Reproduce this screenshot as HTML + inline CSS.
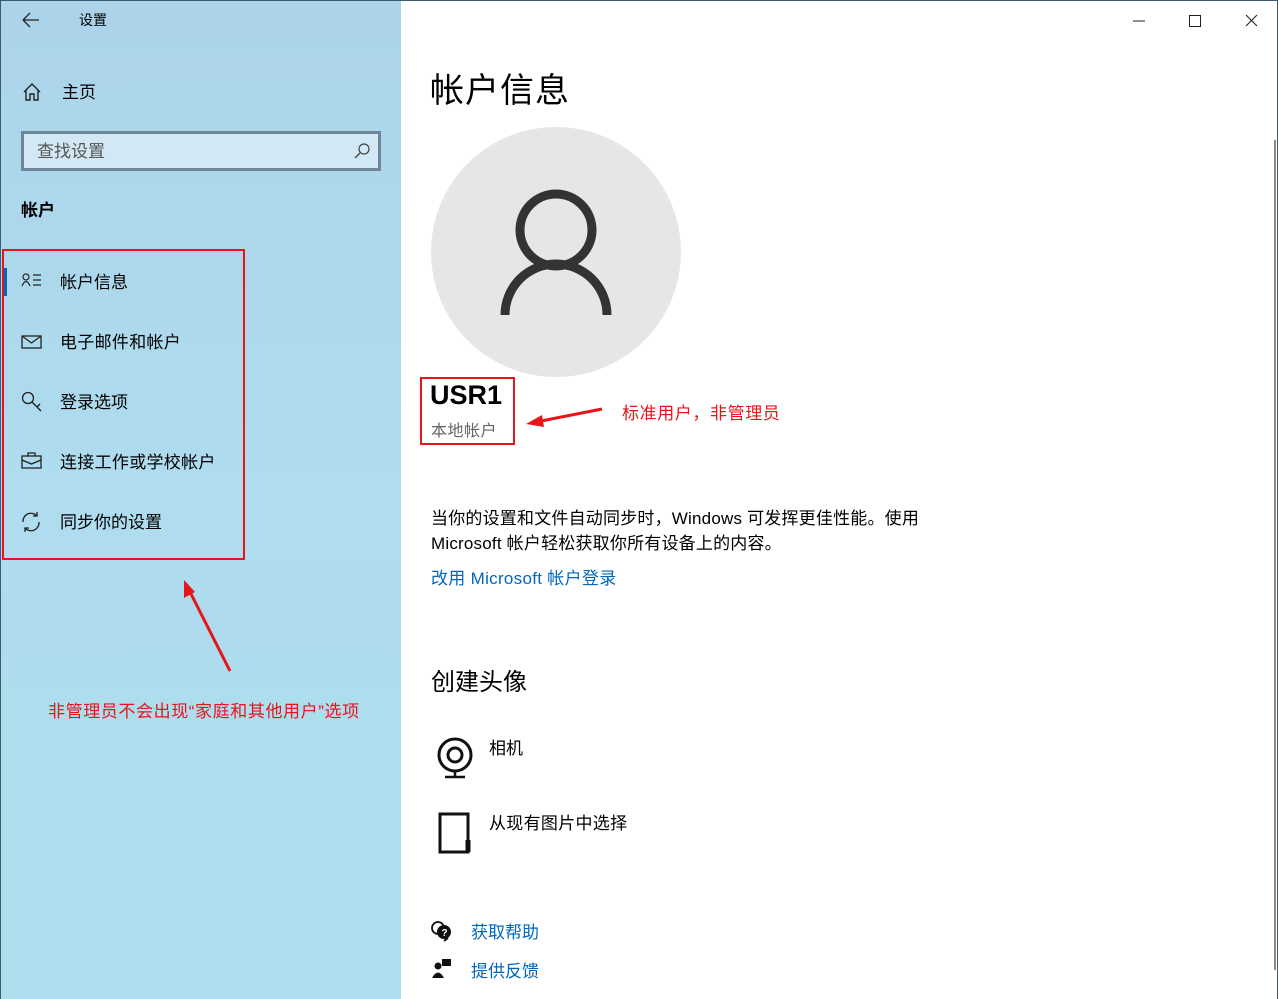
<!DOCTYPE html>
<html><head><meta charset="utf-8"><style>
*{margin:0;padding:0;box-sizing:border-box}
body{width:1278px;height:999px;position:relative;overflow:hidden;background:#fff;font-family:"Liberation Sans","Noto Sans CJK SC",sans-serif;color:#000}
.a{position:absolute;white-space:nowrap}
#side{position:absolute;left:0;top:0;width:401px;height:999px;background:linear-gradient(180deg,#abd4ea 0%,#afdcee 50%,#addeee 100%);border-left:1px solid #3d5a6e;border-top:1px solid #3d5a6e}
.nav{font-size:17px}
.red{color:#e8141a}
.blue{color:#0067c0}
</style></head><body>
<div id="side"></div>
<div style="position:absolute;left:0;top:0;width:1278px;height:1px;background:#3d5a6e"></div>
<div style="position:absolute;right:0;top:0;width:1px;height:999px;background:#3d5a6e"></div>
<svg class="a" style="left:22px;top:12px" width="18" height="16"><path d="M1 8H17M1 8L8 1M1 8L8 15" stroke="#222" stroke-width="1.3" fill="none"/></svg>
<div class="a" style="left:79px;top:10px;font-size:14px">设置</div>
<svg class="a" style="left:22px;top:82px" width="20" height="20"><path d="M2 10L10 2L18 10M4 8V18H8V12H12V18H16V8" stroke="#222" stroke-width="1.4" fill="none"/></svg>
<div class="a nav" style="left:62px;top:78px">主页</div>
<div class="a" style="left:21px;top:131px;width:360px;height:40px;border:3px solid #6f8796;background:#d2e8f4"></div>
<div class="a" style="left:37px;top:137px;font-size:17px;color:#555">查找设置</div>
<svg class="a" style="left:353px;top:142px" width="18" height="18"><circle cx="11" cy="7" r="5" stroke="#444" stroke-width="1.2" fill="none"/><path d="M7 11L2 16" stroke="#444" stroke-width="1.3"/></svg>
<div class="a" style="left:21px;top:196px;font-size:17px;font-weight:bold">帐户</div>
<div class="a" style="left:2px;top:249px;width:243px;height:311px;border:2px solid #e8141a"></div>
<div class="a" style="left:4px;top:268px;width:3px;height:28px;background:#0067c0"></div>
<svg class="a" style="left:21px;top:273px" width="22" height="14"><circle cx="5" cy="4" r="3" stroke="#222" stroke-width="1.2" fill="none"/><path d="M1 13Q5 4 9 13M12 2H20M12 7H20M12 12H20" stroke="#222" stroke-width="1.2" fill="none"/></svg>
<div class="a nav" style="left:60px;top:268px">帐户信息</div>
<svg class="a" style="left:21px;top:335px" width="21" height="14"><rect x="1" y="1" width="19" height="12" stroke="#222" stroke-width="1.3" fill="none"/><path d="M1 1L10.5 8L20 1" stroke="#222" stroke-width="1.3" fill="none"/></svg>
<div class="a nav" style="left:60px;top:328px;letter-spacing:0.3px">电子邮件和帐户</div>
<svg class="a" style="left:21px;top:391px" width="22" height="22"><circle cx="7" cy="7" r="5.5" stroke="#222" stroke-width="1.3" fill="none"/><path d="M11 11L20 20M16 16L19 13" stroke="#222" stroke-width="1.4" fill="none"/></svg>
<div class="a nav" style="left:60px;top:388px">登录选项</div>
<svg class="a" style="left:21px;top:452px" width="21" height="17"><rect x="1" y="4" width="19" height="12" stroke="#222" stroke-width="1.3" fill="none"/><path d="M7 4V1H14V4M1 8L10.5 12L20 8" stroke="#222" stroke-width="1.3" fill="none"/></svg>
<div class="a nav" style="left:60px;top:448px;letter-spacing:0.3px">连接工作或学校帐户</div>
<svg class="a" style="left:20px;top:511px" width="22" height="22"><path d="M3 11A8 8 0 0 1 17 5M19 11A8 8 0 0 1 5 17M17 1V5H13M5 21V17H9" stroke="#222" stroke-width="1.3" fill="none"/></svg>
<div class="a nav" style="left:60px;top:508px">同步你的设置</div>
<svg class="a" style="left:180px;top:578px" width="55" height="96"><path d="M50 93L6 6" stroke="#e8141a" stroke-width="3"/><path d="M4 2L4 20L15 14Z" fill="#e8141a"/></svg>
<div class="a red" style="left:48px;top:697px;font-size:17px;letter-spacing:0.6px">非管理员不会出现“家庭和其他用户”选项</div>

<svg class="a" style="left:1125px;top:12px" width="140" height="20"><path d="M8 9H20" stroke="#222"/><rect x="64.5" y="3.5" width="11" height="11" stroke="#222" fill="none"/><path d="M121 3L132 14M132 3L121 14" stroke="#222" stroke-width="1.1"/></svg>
<div class="a" style="left:1274px;top:140px;width:2px;height:830px;background:#8a8a8a"></div>
<div class="a" style="left:430px;top:63px;font-size:34px;letter-spacing:1px">帐户信息</div>
<div class="a" style="left:431px;top:127px;width:250px;height:250px;border-radius:50%;background:#e6e6e6"></div>
<svg class="a" style="left:498px;top:187px" width="116" height="130"><circle cx="58" cy="43" r="36" stroke="#333" stroke-width="9" fill="none"/><path d="M7 128A51 51 0 0 1 109 128" stroke="#333" stroke-width="9" fill="none"/></svg>
<div class="a" style="left:420px;top:377px;width:95px;height:68px;border:2px solid #e8141a"></div>
<div class="a" style="left:430px;top:380px;font-size:27px;font-weight:bold">USR1</div>
<div class="a" style="left:431px;top:417px;font-size:16px;color:#666;letter-spacing:0.5px">本地帐户</div>
<svg class="a" style="left:524px;top:405px" width="80" height="24"><path d="M78 4L12 17" stroke="#e8141a" stroke-width="3"/><path d="M2 19L18 10L20 22Z" fill="#e8141a"/></svg>
<div class="a red" style="left:622px;top:399px;font-size:17px;letter-spacing:0.6px">标准用户，非管理员</div>
<div class="a" style="left:431px;top:506px;font-size:17px;line-height:25px;letter-spacing:0.2px">当你的设置和文件自动同步时，Windows 可发挥更佳性能。使用<br>Microsoft 帐户轻松获取你所有设备上的内容。</div>
<div class="a blue" style="left:431px;top:564px;font-size:17px;letter-spacing:0.3px">改用 Microsoft 帐户登录</div>
<div class="a" style="left:431px;top:662px;font-size:24px">创建头像</div>
<svg class="a" style="left:436px;top:737px" width="38" height="42"><circle cx="19" cy="18" r="16" stroke="#111" stroke-width="3" fill="none"/><circle cx="19" cy="18" r="7" stroke="#111" stroke-width="3" fill="none"/><path d="M19 34V39M9 40H29" stroke="#111" stroke-width="2.5"/></svg>
<div class="a" style="left:489px;top:734px;font-size:17px">相机</div>
<svg class="a" style="left:438px;top:812px" width="36" height="44"><path d="M2 2H30V40H2Z" stroke="#111" stroke-width="3" fill="none"/><path d="M30 28V40" stroke="#111" stroke-width="5"/></svg>
<div class="a" style="left:489px;top:809px;font-size:17px;letter-spacing:0.3px">从现有图片中选择</div>
<svg class="a" style="left:430px;top:920px" width="22" height="22"><circle cx="8" cy="8" r="6" stroke="#111" stroke-width="1.8" fill="none"/><circle cx="14" cy="12" r="7" fill="#111"/><path d="M14 21L18 18" stroke="#111" stroke-width="2"/><text x="11.5" y="16" font-size="10" fill="#fff" font-weight="bold" font-family="Liberation Sans">?</text></svg>
<div class="a blue" style="left:471px;top:918px;font-size:17px">获取帮助</div>
<svg class="a" style="left:432px;top:959px" width="20" height="20"><circle cx="6" cy="7" r="3.5" fill="#111"/><path d="M0 19Q6 8 12 19Z" fill="#111"/><rect x="10" y="0" width="9" height="7" fill="#111"/></svg>
<div class="a blue" style="left:471px;top:957px;font-size:17px">提供反馈</div>
</body></html>
